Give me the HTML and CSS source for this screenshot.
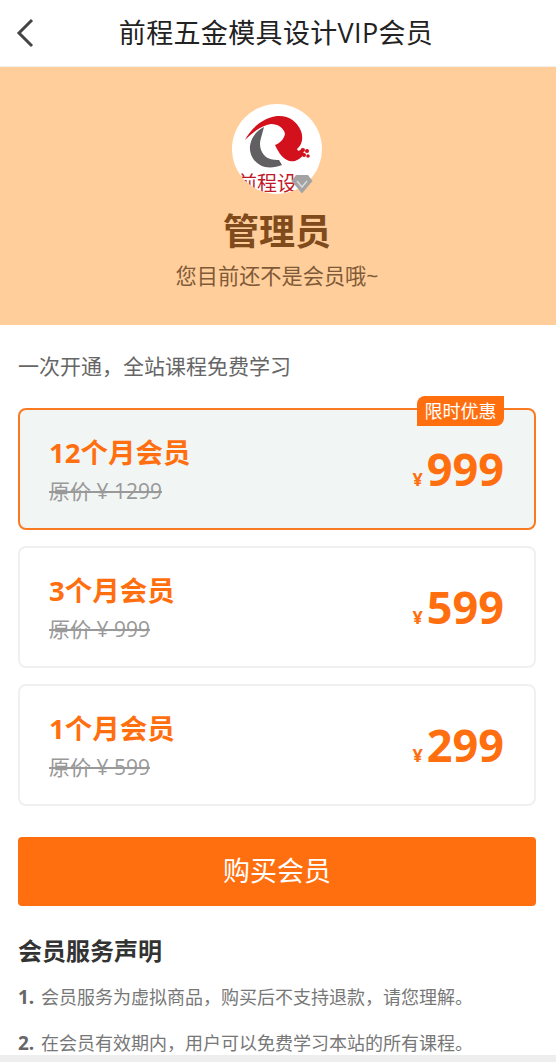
FILE: index.html
```html
<!DOCTYPE html>
<html lang="zh-CN">

<head>
    <meta charset="UTF-8">
    <meta name="viewport" content="width=device-width, initial-scale=1.0">
    <title>前程五金模具设计VIP会员</title>
    <link rel="stylesheet" href="styles.css">
</head>

<body>
    <header class="topbar">
        <svg class="back-icon" width="20" height="36" viewBox="0 0 20 36">
            <path d="M17 5 L4 18 L17 31" fill="none" stroke="#444" stroke-width="3" />
        </svg>
        <h1 class="topbar-title">前程五金模具设计VIP会员</h1>
    </header>

    <section class="hero">
        <div class="avatar-wrap">
            <svg class="avatar" width="90" height="90" viewBox="0 0 90 90">
                <defs>
                    <clipPath id="avatar-clip">
                        <circle cx="45" cy="45" r="45" />
                    </clipPath>
                </defs>
                <g clip-path="url(#avatar-clip)">
                    <rect width="90" height="90" fill="#fff" />
                    <!-- red swoosh of the Q -->
                    <path d="M13 36 C20 22 34 13 45 12 C56 11 65 17 69 27 C72 35 69 42 65 45 C66 48 68 47 70 44 L72 50 C67 57 60 59 55 56 C49 53 46 47 43 41 C48 39 52 35 53 30 C52 24 46 20 39 20 C30 21 21 28 13 36 Z" fill="#d3111c" />
                    <!-- grey lower bowl -->
                    <path d="M32 23 C24 27 19 34 18 42 C17 52 24 61 33 63 C39 64 45 63 50 61 L47 56 C41 56 35 55 32 51 C28 46 27 40 29 34 C30 30 31 27 32 23 Z" fill="#615f61" />
                    <!-- paw dots -->
                    <circle cx="71" cy="46" r="2" fill="#d3111c" />
                    <circle cx="75" cy="47" r="2" fill="#d3111c" />
                    <circle cx="72" cy="51" r="2" fill="#d3111c" />
                    <circle cx="76" cy="52" r="1.800" fill="#d3111c" />
                    <text x="5" y="87" class="avatar-text">前程设</text>
                </g>
            </svg>
            <svg class="vip-badge" width="22" height="20" viewBox="0 0 22 20">
                <path d="M5 1 H17 L21.500 7 L11 19.500 L0.500 7 Z" fill="#a3a3a3" />
                <path d="M6 7 L11 13 L16 7" fill="none" stroke="#d8d8d8" stroke-width="1.500" />
            </svg>
        </div>
        <div class="hero-name">管理员</div>
        <div class="hero-tip">您目前还不是会员哦~</div>
    </section>

    <main class="content">
        <p class="intro">一次开通，全站课程免费学习</p>

        <div class="plan plan-active">
            <span class="plan-tag">限时优惠</span>
            <div class="plan-info">
                <div class="plan-name">12个月会员</div>
                <div class="plan-old">原价 ¥ 1299</div>
            </div>
            <div class="plan-price"><span class="yen">¥</span>999</div>
        </div>

        <div class="plan">
            <div class="plan-info">
                <div class="plan-name">3个月会员</div>
                <div class="plan-old">原价 ¥ 999</div>
            </div>
            <div class="plan-price"><span class="yen">¥</span>599</div>
        </div>

        <div class="plan">
            <div class="plan-info">
                <div class="plan-name">1个月会员</div>
                <div class="plan-old">原价 ¥ 599</div>
            </div>
            <div class="plan-price"><span class="yen">¥</span>299</div>
        </div>

        <button class="buy-button">购买会员</button>

        <h2 class="notice-title">会员服务声明</h2>
        <p class="notice-item"><b>1.</b> 会员服务为虚拟商品，购买后不支持退款，请您理解。</p>
        <p class="notice-item"><b>2.</b> 在会员有效期内，用户可以免费学习本站的所有课程。</p>
    </main>

    <div class="bottom-strip"></div>
</body>

</html>
```

FILE: styles.css
```css
html,
body {
    height: 1062px;
    overflow: hidden;
}

body {
    position: relative;
    margin: 0;
    font-family: "Open Sans", "Noto Sans CJK SC", sans-serif;
    background-color: #fff;
    color: #333;
}

.topbar {
    position: relative;
    height: 67px;
    padding: 0 4px 3px 0;
    box-sizing: border-box;
    display: flex;
    align-items: center;
    justify-content: center;
    border-bottom: 1px solid #f3efe9;
}

.back-icon {
    position: absolute;
    left: 15px;
    top: 15px;
}

.topbar-title {
    margin: 0;
    font-size: 27px;
    letter-spacing: 0.35px;
    font-weight: 400;
    color: #222;
}

.hero {
    height: 258px;
    padding: 37px 2px 0 0;
    background-color: #ffce9b;
    display: flex;
    flex-direction: column;
    align-items: center;
    box-sizing: border-box;
}

.avatar-wrap {
    position: relative;
    width: 90px;
    height: 90px;
}

.avatar {
    display: block;
}

.avatar-text {
    font-size: 20px;
    fill: #c01a2a;
    font-family: "Noto Sans CJK SC", sans-serif;
}

.vip-badge {
    position: absolute;
    right: 9px;
    bottom: 0;
}

.hero-name {
    margin-top: 13px;
    font-size: 36px;
    line-height: 50px;
    font-weight: 700;
    color: #7f4a1c;
}

.hero-tip {
    margin-top: 5px;
    font-size: 21.200px;
    line-height: 28px;
    color: #7f5a38;
}

.content {
    padding: 0 20px 0 18px;
}

.intro {
    margin: 0;
    padding: 27px 0 28px;
    font-size: 21px;
    line-height: 28px;
    color: #666;
}

.plan {
    position: relative;
    height: 122px;
    box-sizing: border-box;
    margin-bottom: 16px;
    padding: 0 30px 0 29px;
    display: flex;
    align-items: center;
    justify-content: space-between;
    border: 2px solid #f0f0f0;
    border-radius: 8px;
    background-color: #fff;
}

.plan-active {
    border-color: #fa7a21;
    background-color: #f1f5f4;
}

.plan-tag {
    position: absolute;
    top: -14px;
    right: 30px;
    width: 87px;
    height: 30px;
    font-size: 18px;
    line-height: 30px;
    text-align: center;
    color: #fff;
    background-color: #ff6f0f;
    border-radius: 8px 0 8px 0;
}

.plan-info {
    padding-top: 2px;
}

.plan-name {
    font-size: 27.500px;
    line-height: 36px;
    font-weight: 700;
    color: #ff6f0f;
}

.plan-old {
    margin-top: 6px;
    font-size: 21px;
    line-height: 28px;
    color: #999;
    text-decoration: line-through;
}

.plan-price {
    margin-top: 10px;
    font-size: 45px;
    line-height: 60px;
    font-weight: 700;
    color: #ff6f0f;
}

.yen {
    font-size: 18px;
    margin-right: 4px;
}

.buy-button {
    display: block;
    width: 518px;
    height: 69px;
    margin-top: 31px;
    padding: 0 0 4px;
    border: none;
    border-radius: 4px;
    background-color: #ff6f0f;
    color: #fff;
    font-family: inherit;
    font-size: 27px;
}

.notice-title {
    margin: 29px 0 0;
    font-size: 24px;
    line-height: 32px;
    font-weight: 700;
    color: #333;
}

.notice-item {
    margin: 14px 0 0;
    font-size: 18px;
    line-height: 32px;
    color: #777;
}

.notice-item b {
    margin-right: 2px;
    font-size: 19px;
    color: #666;
}

.bottom-strip {
    position: absolute;
    left: 0;
    right: 0;
    bottom: 0;
    height: 7px;
    background-color: #eee;
}
```
